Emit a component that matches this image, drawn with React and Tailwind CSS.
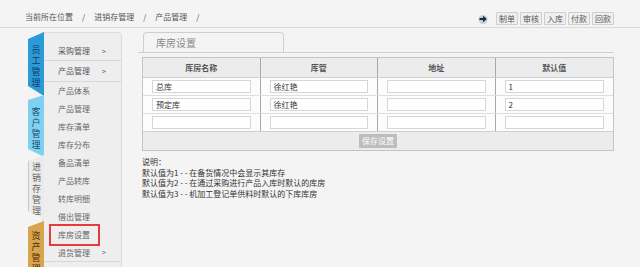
import React from "react";

const subItems = ["产品体系", "产品管理", "库存清单", "库存分布", "备品清单", "产品转库", "转库明细", "借出管理"];

function VTab({ chars, className, textClass, clip, pt }) {
  return (
    <div className={`w-[16px] flex flex-col items-center ${className} ${clip} ${pt}`}>
      {chars.split("").map((c, i) => (
        <span key={i} className={`text-[9px] leading-[11px] ${textClass}`}>{c}</span>
      ))}
    </div>
  );
}

const rows = [
  ["总库", "徐红艳", "", "1"],
  ["预定库", "徐红艳", "", "2"],
  ["", "", "", ""],
];

export default function App() {
  return (
    <div className="w-[640px] h-[267px] overflow-hidden bg-[#f4f4f4] text-[#555] font-['Noto_Sans_CJK_SC',sans-serif]">
      {/* header */}
      <div className="h-[28px] border-b border-[#dcdcdc] flex items-start justify-between pl-[25px] pr-[26px] pt-[12px]">
        <div className="flex items-center text-[8px] leading-[10px] text-[#555]">
          <span>当前所在位置</span>
          <span className="mx-[9px]">/</span>
          <span>进销存管理</span>
          <span className="mx-[9px]">/</span>
          <span>产品管理</span>
          <span className="mx-[9px]">/</span>
        </div>
        <div className="flex items-center gap-[2px]">
          <svg width="10" height="10" viewBox="0 0 10 10" className="mr-[6px]">
            <circle cx="5" cy="5.5" r="4.5" fill="#c9ced6" />
            <path d="M1.5 4 H5 V1.8 L8.8 5 L5 8.2 V6 H1.5 Z" fill="#1a2a40" />
          </svg>
          {["制单", "审核", "入库", "付款", "回款"].map((b) => (
            <div key={b} className="w-[22px] h-[13px] border border-[#cfcfcf] bg-[#efefef] rounded-[1px] flex items-center justify-center text-[8px] text-[#555]">
              {b}
            </div>
          ))}
        </div>
      </div>

      {/* body */}
      <div className="flex pt-[4px]">
        {/* sidebar */}
        <div className="flex pl-[28px]">
          <div className="flex flex-col w-[16px]">
            <VTab chars="员工管理" className="h-[64px] bg-[#2b9ad6] rounded-tl-[4px]" textClass="text-[#0b3f6b]" clip="[clip-path:polygon(0_7px,100%_0,100%_100%,0_calc(100%-10px))]" pt="pt-[12px]" />
            <VTab chars="客户管理" className="h-[62px] -mt-[1px] bg-[#7fd1f2]" textClass="text-[#1b4d6c]" clip="[clip-path:polygon(0_5px,100%_0,100%_100%,0_calc(100%-8px))]" pt="pt-[11px]" />
            <VTab chars="进销存管理" className="h-[64px] -mt-[2px] bg-[#ebebeb] border-l border-[#c8c8c8]" textClass="text-[#666]" clip="[clip-path:polygon(0_6px,100%_0,100%_100%,0_calc(100%-8px))]" pt="pt-[6px]" />
            <VTab chars="资产管理" className="h-[50px] mt-[2px] bg-[#d9a44b]" textClass="text-[#4b2f08]" clip="[clip-path:polygon(0_6px,100%_0,100%_100%,0_100%)]" pt="pt-[9px]" />
          </div>
          <div className="-ml-[2px] w-[80px] h-[236px] bg-[#efeeef] border border-[#dcdcdc] rounded-tr-[4px] flex flex-col text-[8px]">
            <div className="h-[28px] pt-[13px] pl-[15px] pr-[15px] flex justify-between border-b border-[#d8d8d8] leading-[10px] text-[#555]">
              <span>采购管理</span>
              <span className="text-[7px]">&gt;</span>
            </div>
            <div className="h-[21px] pl-[15px] pr-[15px] flex items-center justify-between border-b border-[#d8d8d8] text-[#555]">
              <span>产品管理</span>
              <span className="text-[7px]">&gt;</span>
            </div>
            {subItems.map((s) => (
              <div key={s} className="h-[18px] pl-[15px] flex items-center text-[#666]">{s}</div>
            ))}
            <div className="h-[18px] pl-[6px] flex items-center text-[#666]">
              <div className="w-[51px] h-[22px] border-2 border-[#e8393d] flex items-center pl-[7px]">库房设置</div>
            </div>
            <div className="h-[18px] pl-[15px] pr-[15px] flex items-center justify-between border-b border-[#d8d8d8] text-[#666]">
              <span>退货管理</span>
              <span className="text-[7px]">&gt;</span>
            </div>
          </div>
        </div>

        {/* main */}
        <div className="ml-[16px] w-[476px]">
          <div className="border-b border-[#cfcfcf] h-[21px] pl-[5px] flex items-end">
            <div className="w-[141px] h-[20px] border border-b-0 border-[#cfcfcf] rounded-t-[4px] pl-[12px] flex items-center text-[10px] text-[#888]">
              库房设置
            </div>
          </div>
          <div className="ml-[4px] mt-[4px] w-[472px] border border-[#c4c4c4] text-[8px]">
            <div className="grid grid-cols-4 h-[20px] bg-[#ececec] border-b border-[#d0d0d0]">
              {["库房名称", "库管", "地址", "默认值"].map((h, i) => (
                <div key={h} className={`flex items-center justify-center font-semibold text-[#555] ${i < 3 ? "border-r border-[#a8a8a8]" : ""}`}>{h}</div>
              ))}
            </div>
            {rows.map((r, ri) => (
              <div key={ri} className={`grid grid-cols-4 ${ri === 2 ? "h-[17px]" : "h-[18px] border-b border-[#dedede]"} bg-[#fcfcfc]`}>
                {r.map((v, ci) => (
                  <div key={ci} className={`flex items-center px-[9px] ${ci < 3 ? "border-r border-[#a8a8a8]" : ""}`}>
                    <div className="w-full h-[13px] bg-white border border-[#d6d6d6] flex items-center pl-[3px] text-[8px] text-[#333]">{v}</div>
                  </div>
                ))}
              </div>
            ))}
            <div className="h-[19px] bg-[#ececec] border-t border-[#d0d0d0] flex items-center justify-center">
              <div className="w-[38px] h-[14px] bg-[#bdbdbd] rounded-[1px] text-white text-[8px] flex items-center justify-center">保存设置</div>
            </div>
          </div>
          <div className="ml-[4px] mt-[6px] text-[8px] leading-[10.5px] text-[#333]">
            <div>说明：</div>
            <div>默认值为1 - - 在备货情况中会显示其库存</div>
            <div>默认值为2 - - 在通过采购进行产品入库时默认的库房</div>
            <div>默认值为3 - - 机加工登记单供料时默认的下库库房</div>
          </div>
        </div>
      </div>
    </div>
  );
}
